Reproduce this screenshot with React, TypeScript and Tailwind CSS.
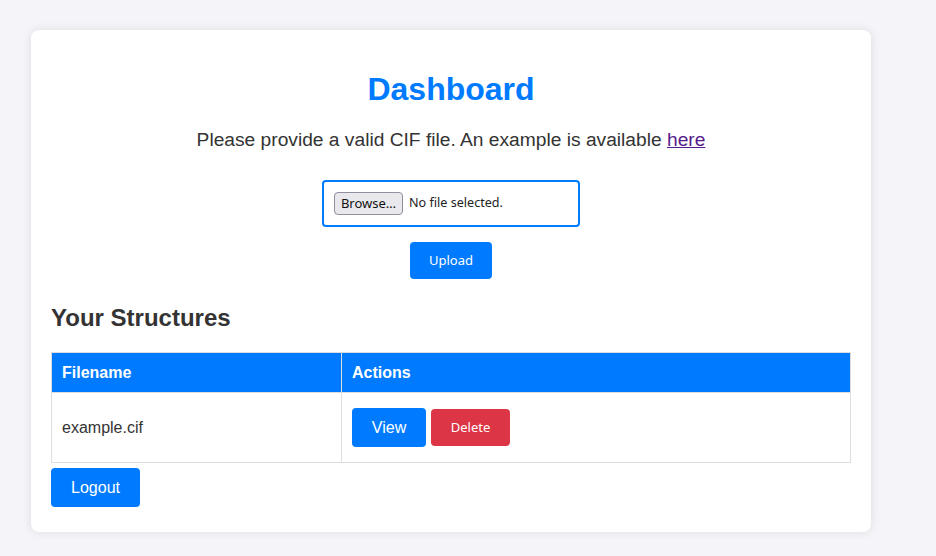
import React from "react";

export default function App() {
  const sans = { fontFamily: '"Liberation Sans", Arial, sans-serif' };
  return (
    <div className="min-h-[556px] w-[936px] bg-[#f4f4f9] pt-[30px] pl-[31px]" style={sans}>
      <div className="w-[840px] rounded-lg bg-white p-[20px] text-[#333] shadow-[0_0_10px_rgba(0,0,0,0.1)]">
        <h1 className="mt-[21px] text-center text-[32px] font-bold leading-[37px] text-[#007bff]">Dashboard</h1>
        <p className="mt-[21px] text-center text-[19.2px] leading-[22px]">
          Please provide a valid CIF file. An example is available{" "}
          <a href="#" className="text-[#551a8b] underline">here</a>
        </p>
        <div className="mx-auto mt-[29px] flex h-[47px] w-[258px] items-center rounded-[4px] border-2 border-[#007bff] px-[10px] font-['Noto_Sans',sans-serif] text-[13px]">
          <span className="flex h-[23px] w-[69px] items-center justify-center rounded-[4px] border border-[#8f8f9d] bg-[#e9e9ed] text-[#111]">Browse…</span>
          <span className="ml-[6px] text-[12.6px] text-[#222]">No file selected.</span>
        </div>
        <div className="mt-[15px] flex justify-center">
          <button className="h-[37px] w-[82px] rounded-[4px] bg-[#007bff] font-['Noto_Sans',sans-serif] text-[13px] text-white">Upload</button>
        </div>
        <h2 className="mt-[25px] text-[24px] font-bold leading-[28px]">Your Structures</h2>
        <table className="mt-[20px] w-[800px] border-collapse text-[16px]">
          <thead>
            <tr className="bg-[#007bff] text-white">
              <th className="h-[40px] w-[290px] border border-[#ddd] px-[10px] text-left font-bold">Filename</th>
              <th className="h-[40px] border border-[#ddd] px-[10px] text-left font-bold">Actions</th>
            </tr>
          </thead>
          <tbody>
            <tr>
              <td className="h-[70px] border border-[#ddd] px-[10px]">example.cif</td>
              <td className="h-[70px] border border-[#ddd] px-[10px]">
                <div className="flex items-center gap-[5px]">
                  <button className="h-[39px] w-[74px] rounded-[4px] bg-[#007bff] text-[16px] text-white">View</button>
                  <button className="h-[37px] w-[79px] rounded-[4px] bg-[#dc3545] font-['Noto_Sans',sans-serif] text-[13px] text-white">Delete</button>
                </div>
              </td>
            </tr>
          </tbody>
        </table>
        <button className="mt-[5px] mb-[5px] block h-[39px] w-[89px] rounded-[4px] bg-[#007bff] text-[16px] text-white">Logout</button>
      </div>
    </div>
  );
}
